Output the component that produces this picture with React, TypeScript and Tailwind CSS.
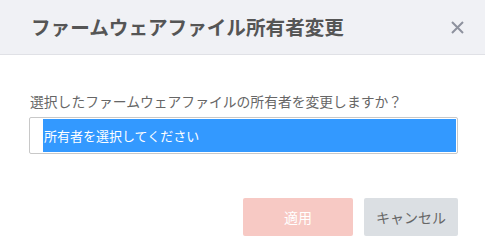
import React from "react";

const font = { fontFamily: '"Noto Sans CJK JP", "Noto Sans", sans-serif' };

const ChangeOwnerDialog: React.FC = () => {
  return (
    <div className="w-[485px] h-[252px] bg-white" style={font}>
      {/* Header */}
      <div className="h-[55px] bg-[#f0f1f5] border-b border-[#e0e1e6] flex items-center justify-between pl-[31px] pr-[21px]">
        <h2 className="text-[19.6px] font-bold text-[#555555] leading-none">
          ファームウェアファイル所有者変更
        </h2>
        <button className="w-[13px] h-[13px] text-[#8e929e]">
          <svg viewBox="0 0 13 13" width="13" height="13">
            <path d="M1 1L12 12M12 1L1 12" stroke="currentColor" strokeWidth="2" />
          </svg>
        </button>
      </div>

      {/* Body */}
      <div className="pl-[29px] pr-[27px] pt-[36px]">
        <p className="text-[13.8px] leading-[20px] text-[#666666] pl-[1px]">
          選択したファームウェアファイルの所有者を変更しますか？
        </p>
        <div className="mt-[6px] w-full h-[37px] border border-[#c8c8c8] rounded-[2px] pl-[13px] pr-[1px] py-[1px]">
          <div className="h-full bg-[#3399ff] text-white text-[13px] flex items-center pl-[1px]">
            所有者を選択してください
          </div>
        </div>

        {/* Footer */}
        <div className="mt-[44px] flex justify-end gap-[11px]">
          <button className="w-[110px] h-[38px] bg-[#f7c9c4] text-white text-[14px] rounded-[2px]">
            適用
          </button>
          <button className="w-[94px] h-[38px] bg-[#dbdfe3] text-[#666666] text-[14px] rounded-[2px]">
            キャンセル
          </button>
        </div>
      </div>
    </div>
  );
};

export default function App() {
  return <ChangeOwnerDialog />;
}
